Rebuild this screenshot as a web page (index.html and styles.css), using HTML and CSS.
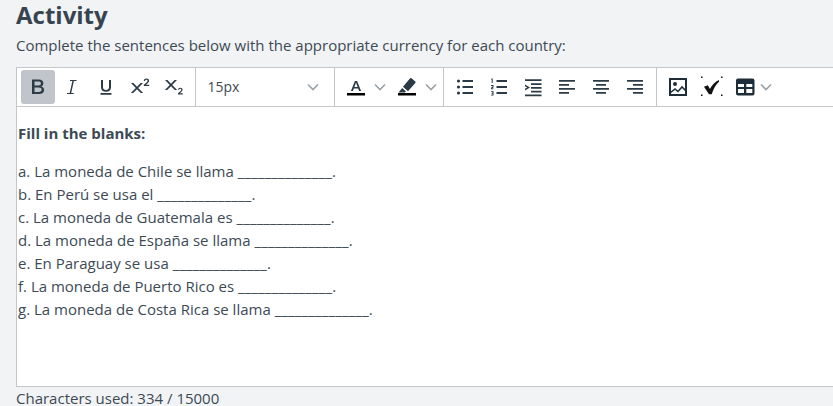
FILE: index.html
```html
<!DOCTYPE html>
<html lang="en">
<head>
<meta charset="utf-8">
<title>Activity</title>
<link rel="stylesheet" href="styles.css">
</head>
<body>
<main class="page">
  <h1 class="title">Activity</h1>
  <p class="lead">Complete the sentences below with the appropriate currency for each country:</p>
  <section class="editor">
    <div class="toolbar">
      <div class="group group-text">
        <button class="btn active"><svg width="24" height="24" viewBox="0 0 24 24"><path fill="#2b3a45" d="M6 4.500h6.600c3 0 4.800 1.400 4.800 3.800 0 1.600-.8 2.700-2.200 3.200 1.800.4 2.900 1.700 2.900 3.500 0 2.600-2 4-5.100 4H6zm2.500 2.100v3.900h3.800c1.700 0 2.600-.7 2.600-2s-.9-1.900-2.600-1.900zm0 6v4.300h4.200c1.900 0 2.900-.8 2.900-2.200s-1-2.100-2.900-2.100z"/></svg></button>
        <button class="btn"><svg width="24" height="24" viewBox="0 0 24 24"><path fill="#2b3a45" d="M10 5h6.500v1h-2.600l-2.700 12h2.500v1H7v-1h2.700l2.700-12H10z"/></svg></button>
        <button class="btn"><svg width="24" height="24" viewBox="0 0 24 24"><path fill="#2b3a45" d="M7 5h2v7c0 2 1.100 3 3 3s3-1 3-3V5h2v7.200c0 3-2 4.600-5 4.600s-5-1.600-5-4.600zM6.500 18h11v1.700h-11z"/></svg></button>
        <button class="btn"><svg width="24" height="24" viewBox="0 0 24 24"><path fill="#2b3a45" d="M3 8h2.400l3.600 3.700L12.600 8H15l-4.800 5 5 5h-2.400L9 14.200 5.200 18H2.800l5-5zM15.800 11v-1.200l2.700-2.400c.8-.7 1.100-1.200 1.100-1.700 0-.6-.5-1-1.200-1s-1.300.4-1.400 1.200h-1.200c.1-1.500 1.200-2.300 2.600-2.300 1.600 0 2.700.8 2.700 2.100 0 .9-.5 1.600-1.500 2.500l-1.700 1.600h3.300V11z"/></svg></button>
        <button class="btn"><svg width="24" height="24" viewBox="0 0 24 24"><path fill="#2b3a45" d="M3 5h2.400L9 8.700 12.600 5H15l-4.800 5 5 5h-2.400L9 11.200 5.200 15H2.800l5-5zM16 19.500v-1.200l2.300-2.100c.7-.6 1-1 1-1.500s-.4-.9-1-.9-1.100.4-1.200 1H16c.1-1.300 1-2.100 2.300-2.100 1.400 0 2.300.8 2.300 1.900 0 .8-.4 1.400-1.300 2.200l-1.400 1.400h2.800v1.300z"/></svg></button>
      </div>
      <div class="group group-size">
        <span class="size-label">15px</span>
        <svg class="chev" width="12" height="8" viewBox="0 0 12 8"><path d="M1 1.500l5 5 5-5" /></svg>
      </div>
      <div class="group group-color">
        <button class="btn"><svg width="24" height="24" viewBox="0 0 24 24"><path fill="#2b3a45" d="M10.900 6h2.200l4 10h-2l-.9-2.500H9.800L8.900 16h-2zm-.5 5.900h3.200L12 7.400z"/><path fill="#000" d="M3 18h18v2.500H3z"/></svg></button>
        <svg class="chev chev-color" width="12" height="8" viewBox="0 0 12 8"><path d="M1 1.500l5 5 5-5" /></svg>
        <button class="btn btn-hl"><svg width="24" height="24" viewBox="0 0 24 24"><path fill="#2b3a45" d="M16.500 3.200l3.800 3.400a1 1 0 0 1 0 1.400l-7.300 8.200-5-4.500 7.100-8.400a1 1 0 0 1 1.400-.1zM7.200 13l3.800 3.500-1.200 1H3.500z"/><path fill="#000" d="M3 18h18v2.500H3z"/></svg></button>
        <svg class="chev chev-color" width="12" height="8" viewBox="0 0 12 8"><path d="M1 1.500l5 5 5-5" /></svg>
      </div>
      <div class="group group-lists">
        <button class="btn"><svg width="24" height="24" viewBox="0 0 24 24"><g fill="#2b3a45"><circle cx="5.500" cy="6" r="1.600"/><circle cx="5.500" cy="12" r="1.600"/><circle cx="5.500" cy="18" r="1.600"/><path d="M9.500 5.100H20v1.800H9.500zM9.500 11.100H20v1.800H9.500zM9.500 17.100H20v1.800H9.500z"/></g></svg></button>
        <button class="btn"><svg width="24" height="24" viewBox="0 0 24 24"><g fill="#2b3a45"><path d="M9.500 5.100H20v1.800H9.500zM9.500 11.100H20v1.800H9.500zM9.500 17.100H20v1.800H9.500z"/><path d="M4.500 3.500h1.200V8H4.700V4.500h-.6zM4 10h2.500v2.500L5 13.500h1.500v.8H4v-1.500l1.500-1V11H4zM4 16h2.500v4.500H4v-.8h1.500v-1H4.600v-.7h.9v-1.200H4z"/></g></svg></button>
        <button class="btn"><svg width="24" height="24" viewBox="0 0 24 24"><g fill="#2b3a45"><path d="M4 4.200h16.500V6H4zM10 8.200h10.500V10H10zM10 12h10.500v1.800H10zM10 15.800h10.500v1.800H10zM4 19.500h16.500v1.800H4zM4 9.500l5 3-5 3v-1.800l2.200-1.200L4 11.300z"/></g></svg></button>
        <button class="btn"><svg width="24" height="24" viewBox="0 0 24 24"><g fill="#2b3a45"><path d="M4 5h16v1.800H4zM4 9h10v1.800H4zM4 13h16v1.800H4zM4 17h10v1.800H4z"/></g></svg></button>
        <button class="btn"><svg width="24" height="24" viewBox="0 0 24 24"><g fill="#2b3a45"><path d="M4 5h16v1.800H4zM7 9h10v1.800H7zM4 13h16v1.800H4zM7 17h10v1.800H7z"/></g></svg></button>
        <button class="btn"><svg width="24" height="24" viewBox="0 0 24 24"><g fill="#2b3a45"><path d="M4 5h16v1.800H4zM10 9h10v1.800H10zM4 13h16v1.800H4zM10 17h10v1.800H10z"/></g></svg></button>
      </div>
      <div class="group group-insert">
        <button class="btn"><svg width="24" height="24" viewBox="0 0 24 24"><path fill="none" stroke="#1f2d38" stroke-width="2" d="M4 4h16v16H4z"/><circle cx="9" cy="9" r="2" fill="#1f2d38"/><path fill="none" stroke="#1f2d38" stroke-width="1.600" d="M4 18l5-4 3 2.500 4-4.500 4 4"/></svg></button>
        <button class="btn"><svg width="24" height="24" viewBox="0 0 24 24"><path fill="#111" d="M4 11.800l3.800-1.600 2.200 3.800C11.500 10.500 14.500 7 19 5v1.800c-3 2.500-5.500 7-7.300 12.400H9z"/><path fill="#111" d="M1 1.500h1.500V3H1zM21 1.500h1.500V3H21zM1 19.500h1.500V21H1zM21 19.500h1.500V21H21z"/></svg></button>
        <button class="btn btn-table"><svg width="24" height="24" viewBox="0 0 24 24"><path fill="#1f2d38" fill-rule="evenodd" d="M5 3.500h14.500a2 2 0 0 1 2 2v13a2 2 0 0 1-2 2H5a2 2 0 0 1-2-2v-13a2 2 0 0 1 2-2zM5 9v3h6V9zm8.300 0v3h6V9zM5 14v4h6v-4zm8.300 0v4h6v-4z"/></svg></button>
        <svg class="chev chev-table" width="12" height="8" viewBox="0 0 12 8"><path d="M1 1.500l5 5 5-5" /></svg>
      </div>
    </div>
    <div class="content">
      <p class="heading">Fill in the blanks:</p>
      <p class="line">a. La moneda de Chile se llama <span class="blank">______________</span>.</p>
      <p class="line">b. En Perú se usa el <span class="blank">______________</span>.</p>
      <p class="line">c. La moneda de Guatemala es <span class="blank">______________</span>.</p>
      <p class="line">d. La moneda de España se llama <span class="blank">______________</span>.</p>
      <p class="line">e. En Paraguay se usa <span class="blank">______________</span>.</p>
      <p class="line">f. La moneda de Puerto Rico es <span class="blank">______________</span>.</p>
      <p class="line">g. La moneda de Costa Rica se llama <span class="blank">______________</span>.</p>
    </div>
  </section>
  <p class="count">Characters used: 334 / 15000</p>
</main>
</body>
</html>
```
FILE: styles.css
```css
* { box-sizing: border-box; }
html, body { margin: 0; height: 100%; overflow: hidden; }
body {
  background: #f1f3f5;
  color: #3d4a54;
  font-family: "Open Sans", sans-serif;
}
.page { width: 900px; padding-left: 16px; }
.title {
  margin: 0;
  height: 34px;
  font-size: 24px;
  line-height: 30px;
  font-weight: 700;
  color: #364450;
}
.lead {
  margin: 0;
  height: 33px;
  font-size: 15px;
  line-height: 22px;
}
.editor {
  width: 884px;
  height: 320px;
  border: 1px solid #c4c7ca;
  background: #fff;
  display: flex;
  flex-direction: column;
}
.toolbar {
  display: flex;
  height: 39px;
  flex: none;
  border-bottom: 1px solid #c4c7ca;
}
.group {
  display: flex;
  align-items: center;
  height: 100%;
  border-right: 1px solid #c4c7ca;
  padding: 0 4px;
}
.group-text { width: 179px; }
.group-size { width: 139px; padding: 0 15px 0 12px; justify-content: space-between; font-size: 14px; color: #3d4a54; }
.size-label { line-height: 20px; margin-left: -0.5px; }
.group-color { width: 109px; }
.group-lists { width: 213px; }
.group-insert { border-right: 0; }
.btn {
  width: 34px;
  height: 34px;
  flex: none;
  margin: 0;
  padding: 0;
  border: 0;
  border-radius: 3px;
  background: none;
  display: flex;
  align-items: center;
  justify-content: center;
}
.btn.active { background: #c1c5cb; }
.chev { flex: none; }
.chev path { fill: none; stroke: #9aa1a7; stroke-width: 1.6; }
.chev-color { margin-left: 1px; margin-right: 3px; width: 12px; }
.btn-hl { margin-left: 1px; }
.btn-table { width: 32px; }
.chev-table { margin-left: -1px; }
.content {
  padding: 15px 1px 0;
  font-size: 15px;
  line-height: 23px;
  color: #3d4a54;
}
.content p { margin: 0; }
.heading { font-weight: 700; margin-bottom: 15px !important; }
.blank { letter-spacing: 0.16px; }
.count {
  margin: 0;
  font-size: 15px;
  line-height: 22px;
}
```
